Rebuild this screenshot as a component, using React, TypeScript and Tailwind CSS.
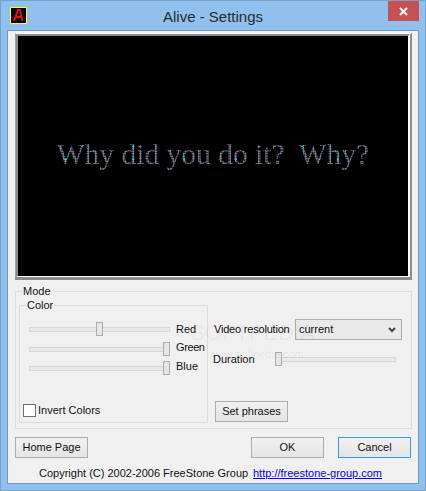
function Slider({ width, pos }: { width: number; pos: number }) {
  return (
    <div className="relative h-[5px] shrink-0 border border-[#d6d6d6] bg-[#e7eaea]" style={{ width }}>
      <div
        className="absolute top-[-6px] h-[14px] w-[7px] border border-[#adadad] bg-[#e6e6e6]"
        style={{ left: pos }}
      />
    </div>
  )
}

function Button({ label, focused = false }: { label: string; focused?: boolean }) {
  return (
    <button
      className={`flex h-[21px] w-[73px] items-center justify-center border bg-gradient-to-b from-[#f0f0f0] to-[#e5e5e5] text-[#111] ${
        focused ? 'border-[#3399ff]' : 'border-[#acacac]'
      }`}
    >
      {label}
    </button>
  )
}

function AppIcon() {
  return (
    <svg width="17" height="17" viewBox="0 0 17 17" className="shrink-0">
      <rect x="0.5" y="0.5" width="16" height="16" fill="#000" stroke="#ffff00" />
      <path d="M4 14 L8 3 H10 L12.5 14 M6 10 H11.5" fill="none" stroke="#e01010" strokeWidth="2" />
    </svg>
  )
}

export default function App() {
  return (
    <div className="flex h-[491px] w-[426px] flex-col border border-[#7aa0c6] bg-[#8fc0ee] text-[11px] leading-none whitespace-nowrap text-[#111] [font-family:'Liberation_Sans',sans-serif]">
      {/* Title bar */}
      <div className="relative flex h-[29px] shrink-0 items-center justify-center pt-[2px] text-[#2b2b2b]">
        <div className="absolute left-[9px] top-[6px]">
          <AppIcon />
        </div>
        <span className="text-[15px]">Alive - Settings</span>
        <div className="absolute right-[6px] top-0 flex h-[20px] w-[31px] items-center justify-center bg-[#c75050]">
          <svg width="9" height="9" viewBox="0 0 9 9">
            <path d="M1 1 L8 8 M8 1 L1 8" stroke="#fff" strokeWidth="2" />
          </svg>
        </div>
      </div>

      {/* Client area */}
      <div className="relative mx-[6px] mb-[6px] flex flex-1 flex-col border border-[#6f9ac2] bg-[#f0f0f0] px-[7px] pt-[2px]">
        {/* Preview */}
        <div className="w-[397px] border-t border-r-2 border-b-[3px] border-l border-t-white border-r-[#8c8c8c] border-b-[#8c8c8c] border-l-[#a0a0a0]">
          <div className="h-[243px] border-t-2 border-r-2 border-b border-l-2 border-t-[#8c8c8c] border-r-white border-b-white border-l-[#8c8c8c] bg-black">
            <div className="flex h-full items-center justify-center pb-[2px]">
              <span className="bg-[radial-gradient(circle,#25c4d8_1px,transparent_1.2px),radial-gradient(circle,#8f91a8_0.8px,#23242f_1.2px)] bg-[length:17px_13px,2.5px_2.5px] bg-clip-text text-[29.5px] text-transparent [font-family:'Liberation_Serif',serif]">
                Why did you do it?&nbsp; Why?
              </span>
            </div>
          </div>
        </div>

        {/* Mode group */}
        <div className="relative mt-[11px] flex h-[138px] w-[397px] gap-[5px] border border-[#dcdcdc] pl-[3px] pt-[13px]">
          <span className="absolute left-[6px] top-[-6px] bg-[#f0f0f0] px-[1px]">Mode</span>

          {/* Color group */}
          <div className="relative flex h-[118px] w-[189px] flex-col border border-[#dcdcdc] pl-[3px]">
            <span className="absolute left-[6px] top-[-6px] bg-[#f0f0f0] px-[1px]">Color</span>
            <div className="mt-[17px] flex h-[12px] items-center gap-[6px] pl-[6px]">
              <Slider width={141} pos={66} />
              <span>Red</span>
            </div>
            <div className="mt-[8px] flex h-[12px] items-center gap-[6px] pl-[6px]">
              <Slider width={141} pos={133} />
              <span className="mb-[4px] tracking-[-0.4px]">Green</span>
            </div>
            <div className="mt-[7px] flex h-[12px] items-center gap-[6px] pl-[6px]">
              <Slider width={141} pos={133} />
              <span className="mb-[4px]">Blue</span>
            </div>
            <div className="mt-auto mb-[5px] flex items-center gap-[2px]">
              <div className="h-[13px] w-[13px] border border-[#707070] bg-white" />
              <span>Invert Colors</span>
            </div>
          </div>

          {/* Right column */}
          <div className="flex flex-col pt-[14px]">
            <div className="flex items-center pl-[1px]">
              <span className="w-[81px] tracking-[-0.2px]">Video resolution</span>
              <div className="flex h-[21px] w-[107px] items-center justify-between border border-[#acacac] bg-[#e9e9e9] pl-[3px] pr-[5px]">
                <span>current</span>
                <svg width="8" height="6" viewBox="0 0 8 6">
                  <path d="M1 1 L4 4 L7 1" fill="none" stroke="#444" strokeWidth="2" />
                </svg>
              </div>
            </div>
            <div className="mt-[13px] flex h-[13px] items-center">
              <span className="w-[64px]">Duration</span>
              <Slider width={119} pos={-3} />
            </div>
            <div className="mt-[35px] pl-[2px]">
              <Button label="Set phrases" />
            </div>
          </div>
        </div>

        {/* Dialog buttons */}
        <div className="mt-[8px] flex w-[396px] items-center">
          <Button label="Home Page" />
          <div className="ml-auto flex gap-[14px]">
            <Button label="OK" />
            <Button label="Cancel" focused />
          </div>
        </div>

        {/* Footer */}
        <div className="mt-[10px] flex items-center pl-[24px]">
          <span className="w-[214px]">Copyright (C) 2002-2006 FreeStone Group</span>
          <a href="#" className="text-[#0000ff] underline">http://freestone-group.com</a>
        </div>

        {/* Softpedia watermark */}
        <span className="pointer-events-none absolute left-[182px] top-[291px] text-[22px] text-black/[0.05]">SOFTPEDIA</span>
        <span className="pointer-events-none absolute left-[201px] top-[318px] text-[11px] text-black/[0.07]">www.softpedia.com</span>
      </div>
    </div>
  )
}
